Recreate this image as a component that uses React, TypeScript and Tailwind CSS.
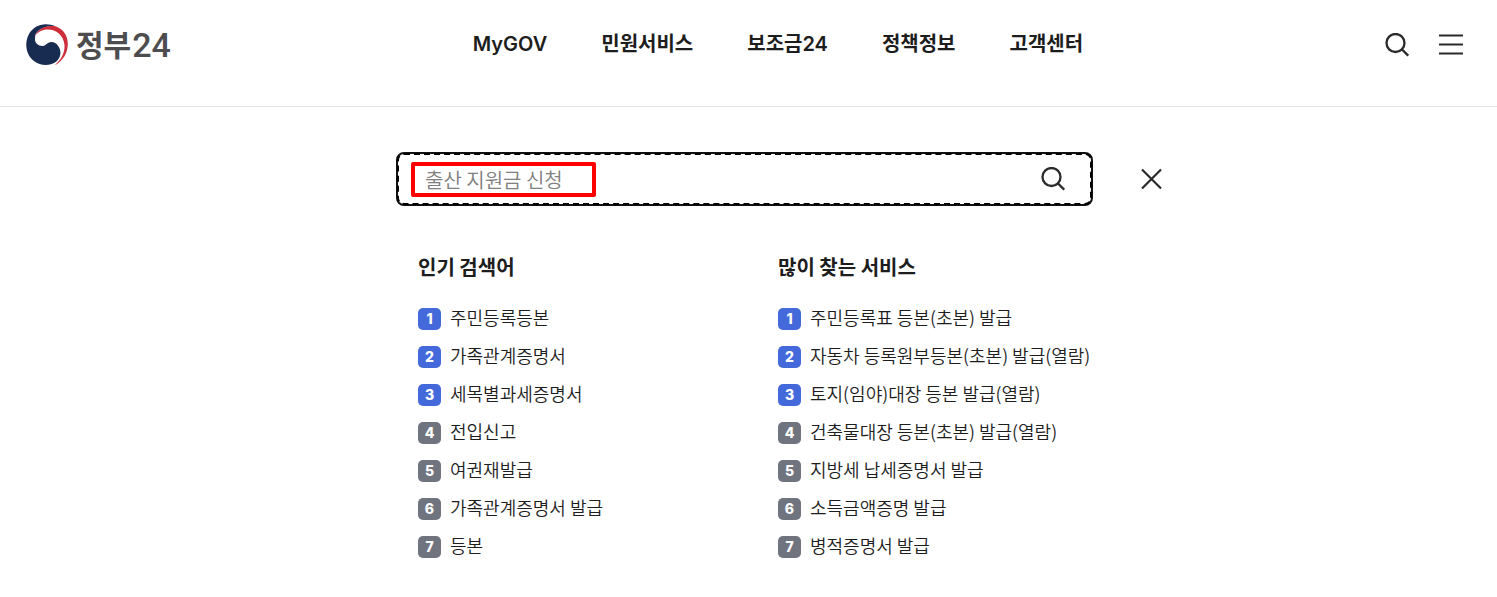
import React from "react";

const navItems = ["MyGOV", "민원서비스", "보조금24", "정책정보", "고객센터"];

const popularTerms = [
  "주민등록등본",
  "가족관계증명서",
  "세목별과세증명서",
  "전입신고",
  "여권재발급",
  "가족관계증명서 발급",
  "등본",
];

const popularServices = [
  "주민등록표 등본(초본) 발급",
  "자동차 등록원부등본(초본) 발급(열람)",
  "토지(임야)대장 등본 발급(열람)",
  "건축물대장 등본(초본) 발급(열람)",
  "지방세 납세증명서 발급",
  "소득금액증명 발급",
  "병적증명서 발급",
];

function SearchIcon() {
  return (
    <svg width="24" height="24" viewBox="0 0 24 24" fill="none" stroke="#2a2a2a" strokeWidth="2.3" aria-hidden="true">
      <circle cx="10.500" cy="10" r="9" />
      <path d="M17 16.500 23.200 22.700" />
    </svg>
  );
}

function Logo() {
  return (
    <a href="#home" aria-label="정부24" className="flex items-center gap-2">
      <svg width="42" height="42" viewBox="0 0 42 42" aria-hidden="true">
        <path
          fill="#182b50"
          d="M30 2.500C19-2.500 8 1 3 10C-2 19 0 31 8 37C15 42.500 25 42 31 37C35 33 35.500 27 32.500 22.500C30.500 19 28 18 25.500 18C21 18 20 22 16.500 22C12 22 9 19 9 15.500C9 14 9 11 10 9.500C13 5 20 1 30 2.500Z"
        />
        <path
          fill="#cd2e3a"
          d="M9 12C13 3.500 22 1 30 2.500C37.500 5 41.800 12 41.800 20C41.800 29 37 37 28.500 41.500C35 36 39 29 38.500 21C37.500 11 30 5.500 22 5.500C16 5.500 12 8 9 12Z"
        />
      </svg>
      <span className="flex items-start gap-px text-[#4d4d4f]">
        <span className="text-3xl leading-9 font-bold">정부</span>
        <span className="font-['Roboto'] text-[34px] leading-10 font-medium">24</span>
      </span>
    </a>
  );
}

function RankedList({ title, items }: { title: string; items: string[] }) {
  return (
    <section>
      <h2 className="text-xl leading-8 font-bold">{title}</h2>
      <ol className="mt-[22px] flex flex-col gap-[10px]">
        {items.map((item, i) => (
          <li key={item}>
            <a href="#result" className="flex h-7 items-center gap-[9px] text-lg leading-7 font-[350] whitespace-nowrap">
              <span
                className={
                  i < 3
                    ? "flex h-[22px] w-[23px] items-center justify-center rounded-[5px] bg-[#4469db] font-['Inter'] text-sm font-extrabold text-white"
                    : "flex h-[22px] w-[23px] items-center justify-center rounded-[5px] bg-[#70747f] font-['Inter'] text-sm font-extrabold text-white"
                }
              >
                {i + 1}
              </span>
              <span className="pb-1">{item}</span>
            </a>
          </li>
        ))}
      </ol>
    </section>
  );
}

export default function App() {
  return (
    <div className="min-h-screen bg-white font-['Noto_Sans_CJK_KR',sans-serif] text-[#1d1d1d]">
      <header className="flex items-center justify-between border-b border-[#e4e4e4] pt-6 pr-[34px] pb-10 pl-[26px]">
        <Logo />
        <nav className="flex gap-[54px] pb-0.5 font-['Inter','Noto_Sans_CJK_KR',sans-serif] text-xl leading-8 font-semibold">
          {navItems.map((item) => (
            <a key={item} href="#menu">
              {item}
            </a>
          ))}
        </nav>
        <div className="flex items-center gap-[30px]">
          <button type="button" aria-label="검색">
            <SearchIcon />
          </button>
          <button type="button" aria-label="전체메뉴">
            <svg width="24" height="24" viewBox="0 0 24 24" stroke="#2a2a2a" strokeWidth="2.200" aria-hidden="true">
              <path d="M0 2.500h24M0 11.500h24M0 20.500h24" />
            </svg>
          </button>
        </div>
      </header>

      <main className="grid grid-cols-[1fr_697px_1fr] items-center pt-[45px] pr-2">
        <form role="search" className="col-start-2 rounded-lg border-2 border-[#111]" onSubmit={(e) => e.preventDefault()}>
          <div className="relative -m-px flex h-[52px] items-center rounded-[7px] border-2 border-dashed border-black pr-[25px]">
            <input
              type="text"
              aria-label="검색어"
              placeholder="출산 지원금 신청"
              className="h-full flex-1 pl-[26px] text-xl font-[350] outline-none placeholder:text-[#808080]"
            />
            <button type="submit" aria-label="검색">
              <SearchIcon />
            </button>
            <div className="pointer-events-none absolute top-[7px] left-3 h-[35px] w-[185px] rounded-xs border-4 border-[#ff0000]" />
          </div>
        </form>
        <button type="button" aria-label="닫기" className="ml-12 justify-self-start">
          <svg width="22" height="22" viewBox="0 0 22 22" stroke="#2a2a2a" strokeWidth="2.200" aria-hidden="true">
            <path d="M1 1.500 20 20.500M20 1.500 1 20.500" />
          </svg>
        </button>
        <div className="col-start-2 mt-[45px] grid grid-cols-[360px_1fr] pl-[22px]">
          <RankedList title="인기 검색어" items={popularTerms} />
          <RankedList title="많이 찾는 서비스" items={popularServices} />
        </div>
      </main>
    </div>
  );
}
